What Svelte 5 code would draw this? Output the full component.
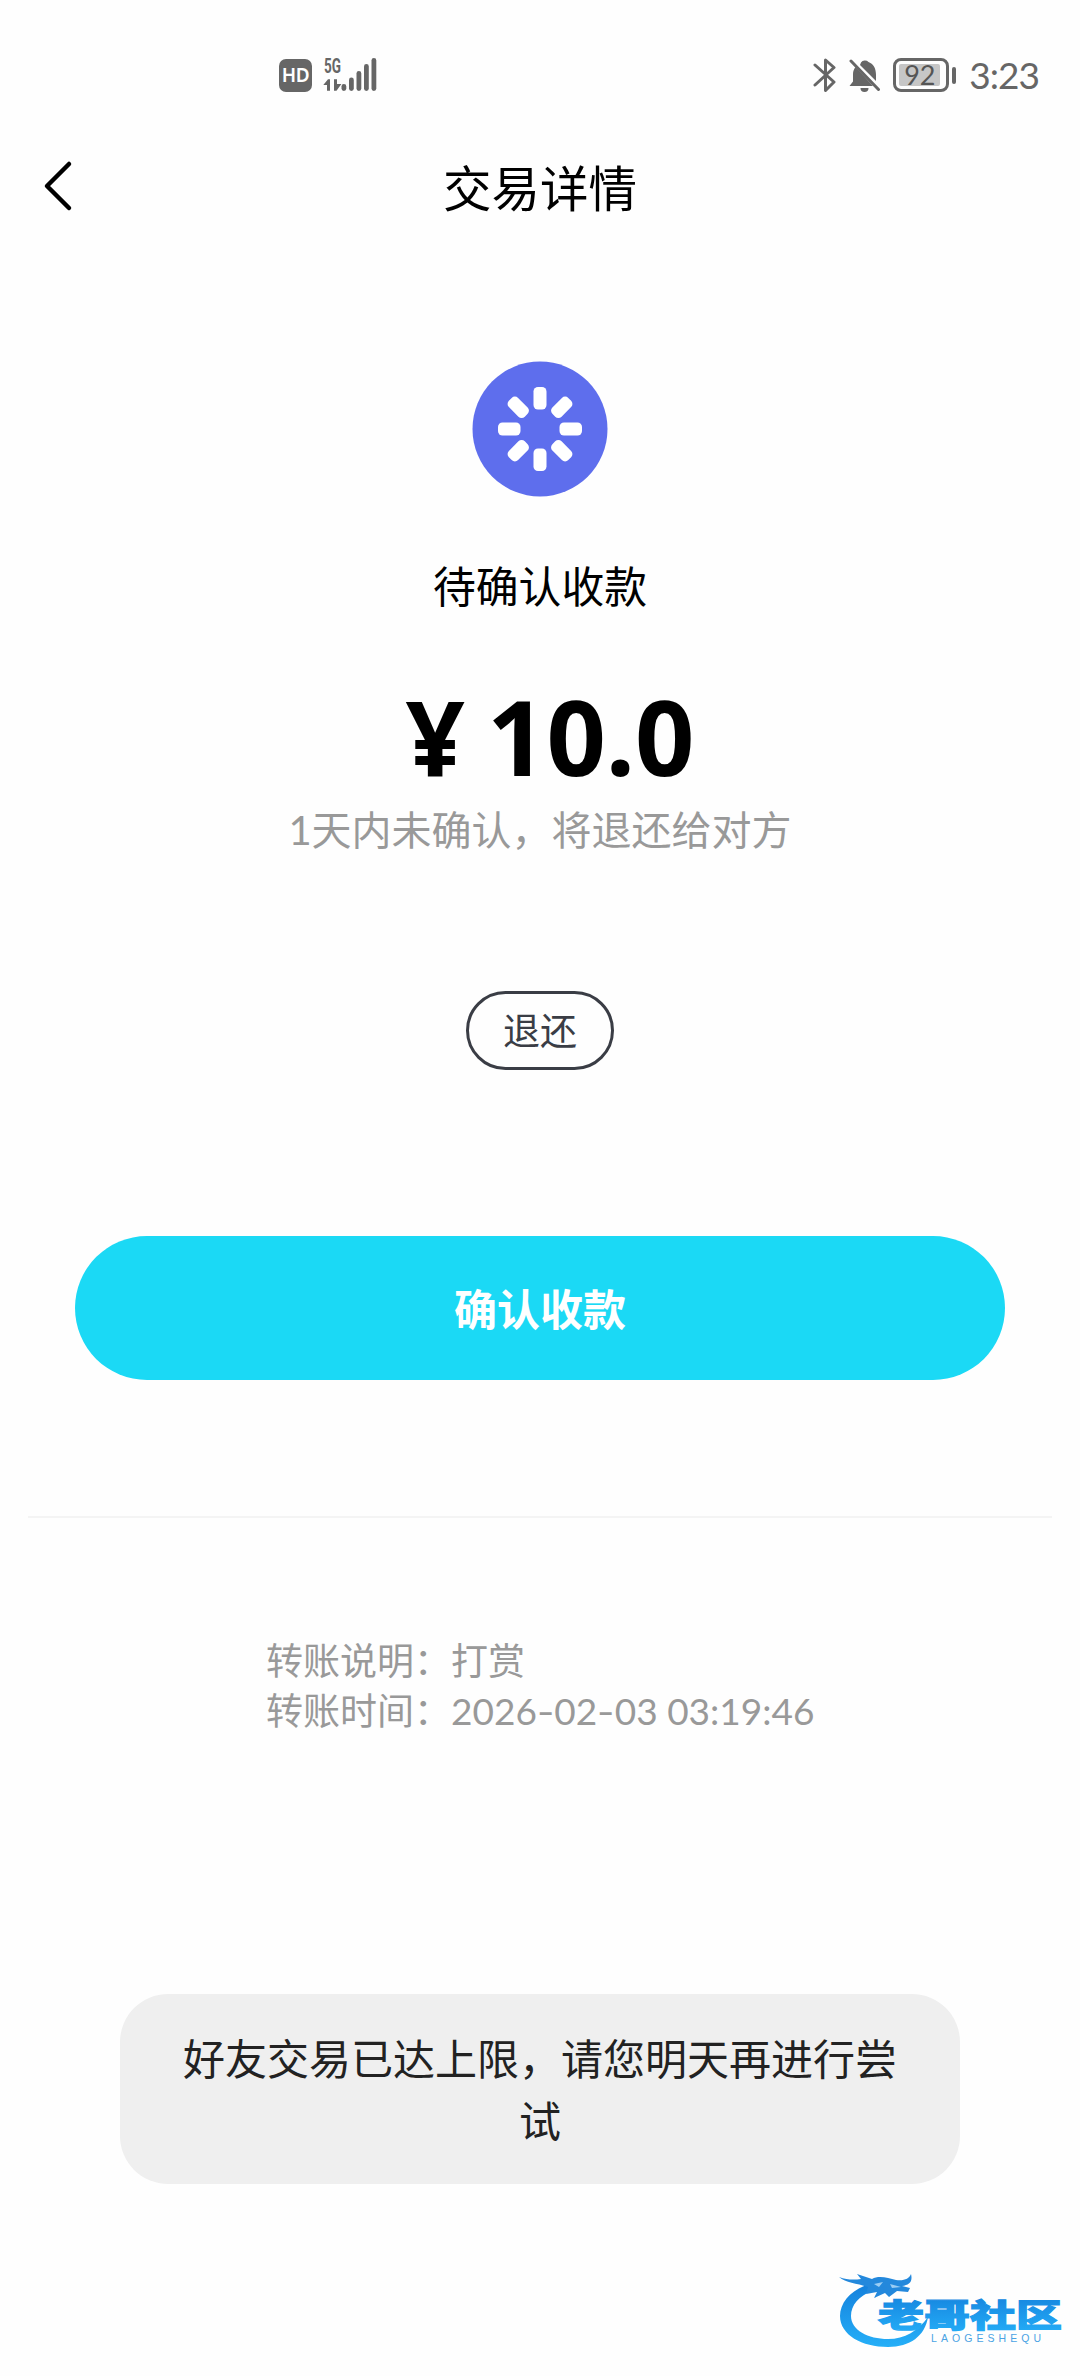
<script>
  let amount = '10.0';
  let time = '3:23';
  let battery = 92;
  let message = '好友交易已达上限，请您明天再进行尝试';
  let date = ['2026', '02', '03 03:19:46'];

  const spokes = [0, 45, 90, 135, 180, 225, 270, 315];
  const bars = [
    { x: 1, y: 26 },
    { x: 8.5, y: 19.5 },
    { x: 16, y: 13 },
    { x: 23.5, y: 6 },
    { x: 31, y: 0 },
  ];
</script>

<main>
  <div class="status-bar">
    <div class="status-left">
      <span class="hd">HD</span>
      <svg class="network" width="60" height="52" viewBox="0 -8 60 52">
        <text class="net-text" x="1" y="15.5" textLength="17" lengthAdjust="spacingAndGlyphs">5G</text>
        <path d="M0.3 28 L5 22.3 H7 V33.7 H4 V28 Z M11 22.3 H14 V27 H18.4 L13.5 33.7 H11 Z" />
        {#each bars as bar}
          <rect x={bar.x + 17.5} y={bar.y + 1} width="4.8" height={33 - bar.y} rx="2.4" />
        {/each}
      </svg>
    </div>
    <div class="status-right">
      <svg class="bluetooth" width="24" height="36" viewBox="0 0 24 36">
        <path d="M2 8 L21 25 L12.5 33.5 V3 L21 10.5 L2 28" />
      </svg>
      <svg class="bell" width="32" height="36" viewBox="0 0 32 36">
        <path d="M12 5.5 A4.6 4 0 0 1 19.5 5 C25 7 27 12 27 18 V24 L11 8 Z" />
        <path d="M6.5 10 L24 29 H0.5 L4 24.5 V17 C4 14 5 12 6.5 10 Z" />
        <path d="M11.5 31 H19.5 A4 4 0 0 1 11.5 31 Z" />
        <path class="slash" d="M2 4 L29.5 32.5" />
      </svg>
      <div class="battery"><span>{battery}</span></div>
      <i class="battery-tip"></i>
      <span class="time">{time}</span>
    </div>
  </div>

  <header>
    <svg class="back" width="34" height="54" viewBox="0 0 34 54">
      <path d="M29 5 L7 27 L29 49" />
    </svg>
    <h1>交易详情</h1>
  </header>

  <section class="detail">
    <svg class="loading" width="136" height="136" viewBox="-68 -68 136 136">
      <circle r="67.5" />
      {#each spokes as angle}
        <rect x="-6.5" y="-42" width="13" height="22.5" rx="4.5" transform="rotate({angle})" />
      {/each}
    </svg>
    <h2>待确认收款</h2>
    <div class="amount"><span class="yen">¥</span>{amount}</div>
    <p class="hint">1天内未确认，将退还给对方</p>
    <button class="refund">退还</button>
    <button class="confirm">确认收款</button>
  </section>

  <div class="info">
    <p>转账说明：打赏</p>
    <p>转账时间：<span class="date">{date[0]}<i>-</i>{date[1]}<i>-</i>{date[2]}</span></p>
  </div>

  <div class="toast">{message}</div>

  <svg class="watermark" width="230" height="90" viewBox="0 0 230 90">
    <defs>
      <linearGradient id="blue" x1="0" y1="0" x2="0" y2="1">
        <stop offset="0" stop-color="#1480dc" />
        <stop offset="1" stop-color="#25aff8" />
      </linearGradient>
    </defs>
    <g transform="translate(0 7)">
      <path fill="url(#blue)" d="M36 15 C18 20 6 33 6 47 C6 66 28 78 54 78 C76 78 91 67 94 48 C84 62 71 70 54 70 C34 70 17 61 17 47 C17 36 25 27 38 22 Z" />
      <path fill="#2388dc" d="M5 8 C13 11 20 11 27 10 L23 5 L38 10 C45 6 54 9 62 11 C70 12 75 10 77 5 C79 13 75 16 68 17 L76 19 L74 23 L63 22 L55 28 L51 24 L40 29 L43 23 L32 25 L34 18 C22 14 12 14 5 8 Z" />
      <path fill="#9bcdf4" d="M40 15 L49 13 L45 18 Z M56 15 L67 18 L58 19 Z" />
    </g>
    <text class="brand" x="0" y="0" textLength="184" lengthAdjust="spacingAndGlyphs" transform="translate(44 64.5) scale(1 0.76)" fill="url(#blue)" stroke="url(#blue)">老哥社区</text>
    <text class="latin" x="97" y="79.5" textLength="110">LAOGESHEQU</text>
  </svg>
</main>

<style>
  :global(body) {
    background-color: #fff;
  }

  main {
    position: relative;
    display: flex;
    flex-direction: column;
    width: 1080px;
    height: 2376px;
    overflow: hidden;
    background-color: #fefefe;
    font-family: 'Lato', 'Noto Sans CJK SC', sans-serif;
    color: #000;
  }

  h1, h2, p {
    margin: 0;
    font-weight: 400;
  }

  button {
    padding: 0;
    border: none;
    background: none;
    font-family: inherit;
  }

  .status-bar {
    display: flex;
    justify-content: space-between;
    height: 36px;
    padding: 57px 41px 0 279px;
    color: #666;
  }

  .status-left,
  .status-right {
    display: flex;
    align-items: center;
  }

  .hd {
    width: 33px;
    height: 33px;
    border-radius: 7px;
    background-color: #666;
    color: #fff;
    font-family: 'Noto Sans', sans-serif;
    font-size: 19px;
    font-weight: 600;
    line-height: 33px;
    text-align: center;
    letter-spacing: -0.5px;
  }

  .network {
    margin: -8px 0 -8px 11px;
    fill: #666;
  }

  .net-text {
    font-family: 'Roboto', sans-serif;
    font-size: 20px;
    font-weight: 700;
  }

  .bluetooth {
    fill: none;
    stroke: #666;
    stroke-width: 3;
    stroke-linejoin: round;
    stroke-linecap: round;
  }

  .bell {
    margin: 0 12px;
    fill: #666;
  }

  .slash {
    stroke: #666;
    stroke-width: 3;
    stroke-linecap: round;
  }

  .battery {
    box-sizing: border-box;
    width: 56px;
    height: 34px;
    padding: 3px;
    border: 3px solid #666;
    border-radius: 8px;
  }

  .battery span {
    display: block;
    width: 41px;
    height: 22px;
    border-radius: 2px;
    background-color: #c6c6c6;
    color: #555;
    font-size: 27px;
    line-height: 22px;
    text-align: center;
  }

  .battery-tip {
    width: 4px;
    height: 17px;
    margin-left: 3px;
    border-radius: 2px;
    background-color: #666;
  }

  .time {
    margin-left: 13px;
    font-size: 37px;
    line-height: 36px;
    letter-spacing: -1px;
  }

  header {
    display: grid;
    grid-template-columns: 140px 1fr 140px;
    align-items: center;
    height: 110px;
    margin-top: 38px;
  }

  .back {
    margin-left: 40px;
    fill: none;
    stroke: #000;
    stroke-width: 4.5;
    stroke-linecap: round;
    stroke-linejoin: round;
  }

  h1 {
    padding-top: 3px;
    font-size: 48.5px;
    line-height: 60px;
    text-align: center;
  }

  .detail {
    display: flex;
    flex-direction: column;
    align-items: center;
    height: 1277px;
    margin: 0 28px;
    padding-top: 120px;
    box-sizing: border-box;
    border-bottom: 2px solid #f4f4f4;
  }

  .loading circle {
    fill: #5e6eed;
  }

  .loading rect {
    fill: #fff;
  }

  h2 {
    margin-top: 60px;
    font-size: 42.8px;
    line-height: 60px;
  }

  .amount {
    margin-top: 59px;
    padding-left: 20px;
    font-family: 'Noto Sans', sans-serif;
    font-size: 104px;
    font-weight: 700;
    line-height: 120px;
  }

  .yen {
    margin-right: 22px;
  }

  .hint {
    margin-top: 4px;
    font-size: 40px;
    line-height: 60px;
    color: #999;
  }

  .refund {
    box-sizing: border-box;
    width: 148px;
    height: 79px;
    margin-top: 131px;
    padding-bottom: 3px;
    border: 3px solid #3a3d45;
    border-radius: 40px;
    font-size: 37px;
    color: #3a3d45;
  }

  .confirm {
    width: 930px;
    height: 144px;
    margin-top: 166px;
    padding-bottom: 3px;
    border-radius: 72px;
    background-color: #1bd9f5;
    font-size: 43px;
    font-weight: 700;
    color: #fff;
  }

  .info {
    margin: 118px 0 0 266px;
    font-size: 37px;
    line-height: 50px;
    color: #999;
  }

  .date i {
    display: inline-block;
    width: 17.5px;
    font-style: normal;
    text-align: center;
    transform: scaleX(1.3);
  }

  .toast {
    box-sizing: border-box;
    width: 840px;
    height: 190px;
    margin: 258px auto 0;
    padding: 34px 60px;
    border-radius: 48px;
    background-color: #efefef;
    font-size: 42px;
    line-height: 62px;
    text-align: center;
    color: #222;
  }

  .watermark {
    position: absolute;
    right: 16px;
    bottom: 24px;
  }

  .brand {
    font-family: 'Noto Sans CJK SC', sans-serif;
    font-size: 42px;
    font-weight: 900;
    stroke-width: 1.5;
  }

  .latin {
    font-family: 'Liberation Sans', sans-serif;
    font-size: 10.5px;
    fill: #4aa3e4;
  }
</style>
